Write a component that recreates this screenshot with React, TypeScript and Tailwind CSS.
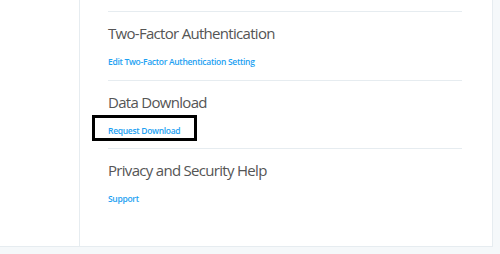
export default function App() {
  const sections = [
    { title: "Two-Factor Authentication", link: "Edit Two-Factor Authentication Setting" },
    { title: "Data Download", link: "Request Download", boxed: true },
    { title: "Privacy and Security Help", link: "Support" },
  ];

  return (
    <div
      className="flex h-[254px] w-[500px] flex-col overflow-hidden bg-[#f5f8fa]"
      style={{ fontFamily: '"Open Sans", "Noto Sans", sans-serif' }}
    >
      <div className="flex h-[247px] w-[493px] shrink-0 border-b border-r border-[#e6ecf0] bg-white">
        <div className="w-[80px] shrink-0 border-r border-[#e6ecf0]" />
        <div className="pl-[28px] pt-[11px]">
          <div className="w-[354px]">
            {sections.map((s) => (
              <div key={s.title} className="border-t border-[#e6ecf0] pt-[11px] pb-[11.5px]">
                <h2 className="text-[15px] leading-[20px] font-normal tracking-[-0.7px] text-[#555]">
                  {s.title}
                </h2>
                <div className="relative mt-[13px] h-[12px]">
                  <a className="block text-[8.5px] leading-[12px] font-semibold tracking-[-0.3px] text-[#1da1f2]">
                    {s.link}
                  </a>
                  {s.boxed && (
                    <span className="absolute left-[-16px] top-[-10px] h-[26px] w-[105px] border-[3px] border-black" />
                  )}
                </div>
              </div>
            ))}
          </div>
        </div>
      </div>
    </div>
  );
}
